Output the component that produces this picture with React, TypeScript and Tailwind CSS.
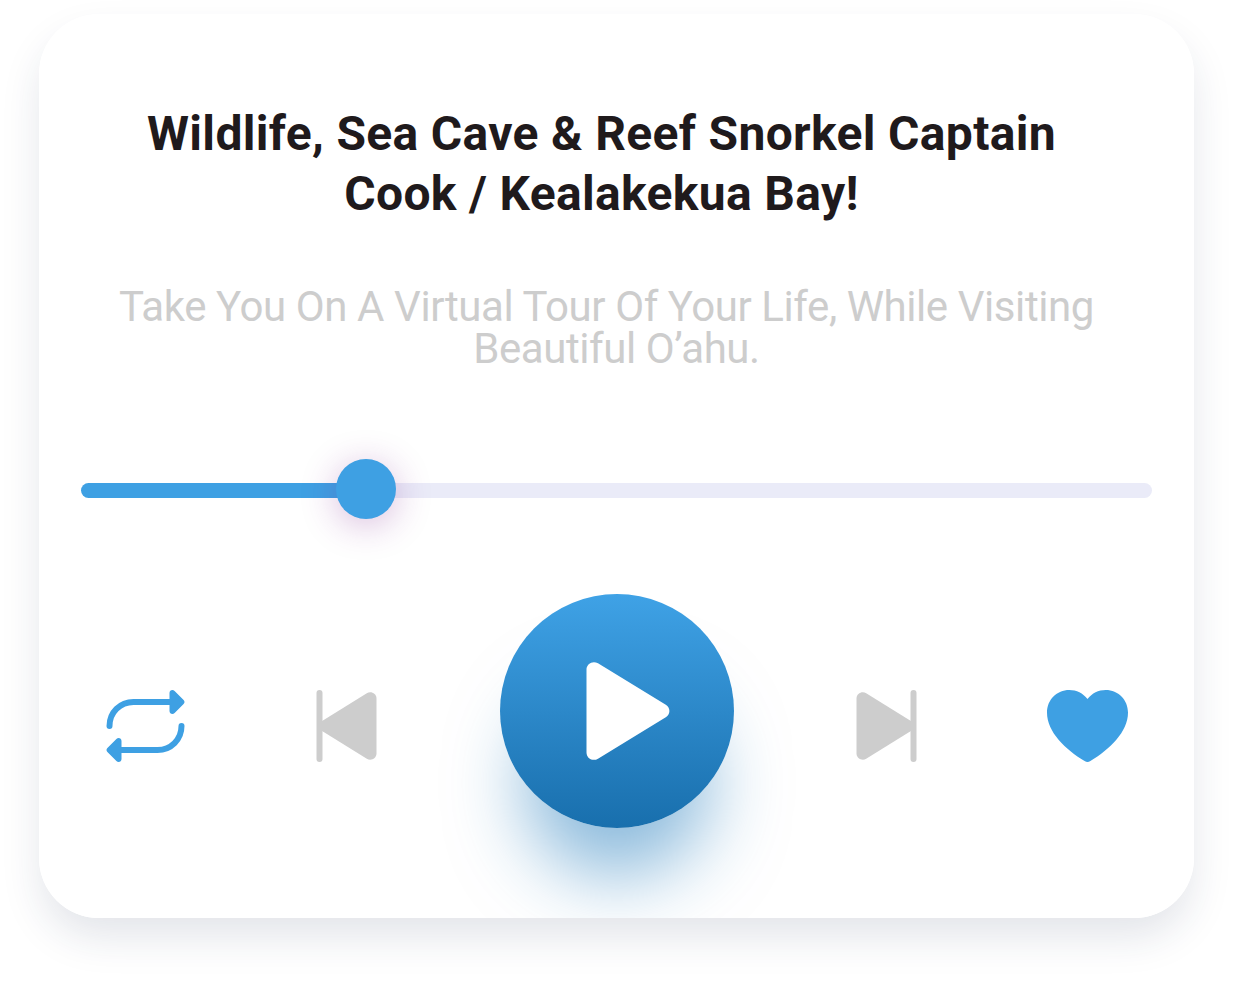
function RepeatIcon() {
  return (
    <svg className="block h-[72px] w-[79px]" viewBox="-0.5 0 79 72" fill="none">
      <path d="M3 36C3 22.500 13.500 12 27 12H66M75 36C75 49.500 64.500 60 51 60H12" stroke="#3ea0e3" strokeWidth="6" strokeLinecap="round" />
      <path d="M63 3C63 0.300 66 -1 68.100 0.900L77.100 9.900C78.300 11.100 78.300 12.900 77.100 14.100L68.100 23.100C66 25 63 23.700 63 21Z" fill="#3ea0e3" />
      <path d="M15 51C15 48.300 12 47 9.900 48.900L0.900 57.900C-0.300 59.100 -0.300 60.900 0.900 62.100L9.900 71.100C12 73 15 71.700 15 69Z" fill="#3ea0e3" />
    </svg>
  );
}

function SkipIcon({ reverse = false }: { reverse?: boolean }) {
  return (
    <svg className="block h-[72px] w-[61px]" viewBox="0 0 61 72">
      <g transform={reverse ? 'translate(60.5 0) scale(-1 1)' : 'translate(0.5 0)'} fill="#cdcdcd">
        <path d="M0 8.500C0 3.500 5.500 0.800 9.700 3.200L54 30.800L58 33.400V38.600L54 41.200L9.700 68.800C5.500 71.200 0 68.500 0 63.500Z" />
        <rect x="54" width="6" height="72" rx="3" />
      </g>
    </svg>
  );
}

function PlayIcon() {
  return (
    <svg className="block h-[98px] w-[84px]" viewBox="0 0 84 98">
      <path d="M0 7.600C0 1.600 6.400 -1.800 11.500 1.300L79.300 42.800C84.100 45.700 84.100 52.300 79.300 55.200L11.500 96.700C6.400 99.800 0 96.400 0 90.400Z" fill="#fff" transform="translate(0.5 0)" />
    </svg>
  );
}

function HeartIcon() {
  return (
    <svg className="block h-[72px] w-[81px]" viewBox="0 0 81 72">
      <path d="M40.500 9C36 3.200 29.500 0 22.300 0C9.800 0 0 9.800 0 22.500C0 42 18.500 59.500 37.600 71.100C39.600 72.300 41.400 72.300 43.400 71.100C62.500 59.500 81 42 81 22.500C81 9.800 71.200 0 58.700 0C51.500 0 45 3.200 40.500 9Z" fill="#3ea0e3" />
    </svg>
  );
}

export default function App() {
  return (
    <main className="h-[981px] w-[1233px] overflow-hidden bg-white px-[39px] pt-[14px] font-['Roboto',sans-serif]">
      <div className="rounded-[60px] shadow-[0_21px_42px_-3px_rgba(30,48,88,0.13)]">
        <section className="flex h-[904px] w-[1155px] flex-col overflow-hidden rounded-[60px] bg-white">
          <h1 className="mt-[90px] pr-[30px] text-center text-[48px] leading-[60px] font-bold tracking-[0.33px] whitespace-nowrap text-[#1f1a1c]">
            <span className="block">Wildlife, Sea Cave &amp; Reef Snorkel Captain</span>
            <span className="block">Cook / Kealakekua Bay!</span>
          </h1>
          <p className="mt-[62px] text-center text-[42px] leading-[42px] tracking-[-0.01em] whitespace-nowrap text-[#cdcdcd]">
            <span className="block pr-5">Take You On A Virtual Tour Of Your Life, While Visiting</span>
            <span className="block">Beautiful O’ahu.</span>
          </p>
          <div className="mx-[42px] mt-[89px] flex h-[60px] items-center">
            <div className="mt-[3px] h-[15px] w-[285px] rounded-l-full bg-[#3ea0e3]" />
            <div className="z-10 -mx-[30px] size-[60px] shrink-0 rounded-full bg-[#3ea0e3] shadow-[0_6px_36px_rgba(123,31,140,0.3)]" />
            <div className="mt-[3px] h-[15px] flex-1 rounded-r-full bg-[#eaebf8]" />
          </div>
          <div className="mt-[75px] flex items-center pl-[67px]">
            <button aria-label="Repeat"><RepeatIcon /></button>
            <button aria-label="Previous" className="ml-[131px]"><SkipIcon reverse /></button>
            <button aria-label="Play" className="mb-[30px] ml-[122.5px] flex size-[234px] items-center justify-center rounded-full bg-linear-to-b from-[#3fa2e6] to-[#186fad] pl-[23px] shadow-[0_72px_75px_-24px_rgba(24,117,185,0.5)]">
              <PlayIcon />
            </button>
            <button aria-label="Next" className="ml-[122.5px]"><SkipIcon /></button>
            <button aria-label="Favorite" className="ml-[130px]"><HeartIcon /></button>
          </div>
        </section>
      </div>
    </main>
  );
}
